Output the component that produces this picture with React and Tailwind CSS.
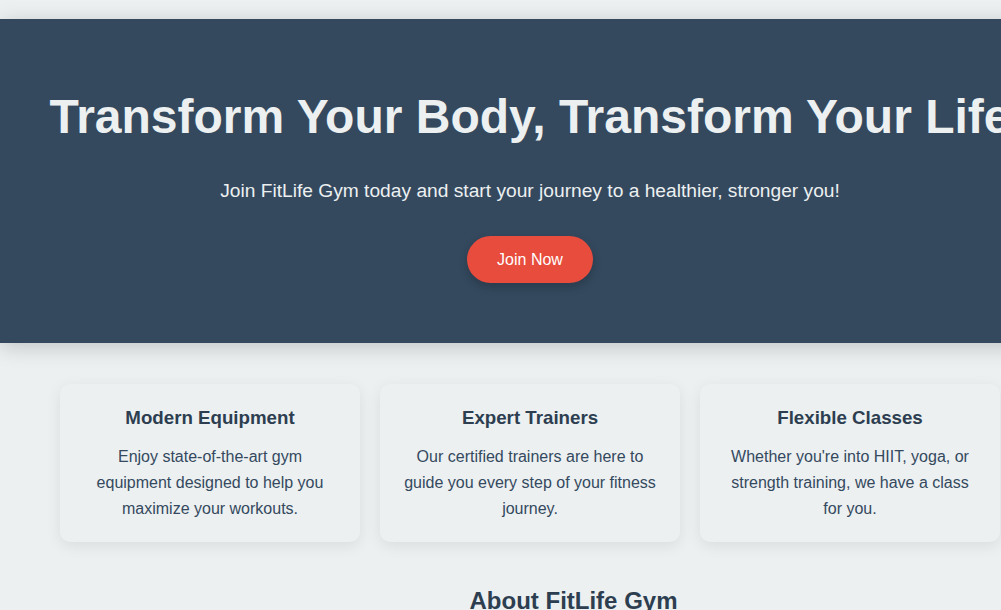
import React from "react";

const features = [
  {
    title: "Modern Equipment",
    text: "Enjoy state-of-the-art gym equipment designed to help you maximize your workouts.",
  },
  {
    title: "Expert Trainers",
    text: "Our certified trainers are here to guide you every step of your fitness journey.",
  },
  {
    title: "Flexible Classes",
    text: "Whether you're into HIIT, yoga, or strength training, we have a class for you.",
  },
];

const App = () => {
  return (
    <div
      className="w-full min-h-[610px] overflow-hidden bg-[#ecf0f1] text-[#2c3e50]"
      style={{ fontFamily: '"Liberation Sans", Arial, sans-serif' }}
    >
      <div className="w-[1060px] pt-[19px]">
        <section className="bg-[#34495e] text-[#ecf0f1] text-center pt-[69px] pb-[60px] shadow-[0_4px_20px_rgba(0,0,0,0.18)]">
          <h1 className="text-[48px] font-bold leading-[1.2] whitespace-nowrap">
            Transform Your Body, Transform Your Life
          </h1>
          <p className="mt-[30px] text-[19.2px] leading-[29px]">
            Join FitLife Gym today and start your journey to a healthier, stronger you!
          </p>
          <button className="mt-[31px] h-[47px] px-[30px] pt-px rounded-full bg-[#e74c3c] text-white text-base shadow-[0_4px_10px_rgba(0,0,0,0.2)]">
            Join Now
          </button>
        </section>

        <section className="px-[60px] pt-[41px] grid grid-cols-3 gap-5">
          {features.map((f) => (
            <div
              key={f.title}
              className="bg-[#ecf0f1] rounded-[10px] p-5 text-center shadow-[0_4px_15px_rgba(0,0,0,0.08)]"
            >
              <h3 className="mt-[2px] text-[18.72px] font-bold leading-[24px] text-[#2c3e50]">{f.title}</h3>
              <p className="mt-[14px] text-base leading-[26px] text-[#34495e]">{f.text}</p>
            </div>
          ))}
        </section>

        <section className="w-[1147px] text-center pt-[44px]">
          <h2 className="text-[24px] font-bold leading-[30px] text-[#2c3e50]">About FitLife Gym</h2>
        </section>
      </div>
    </div>
  );
};

export default App;
